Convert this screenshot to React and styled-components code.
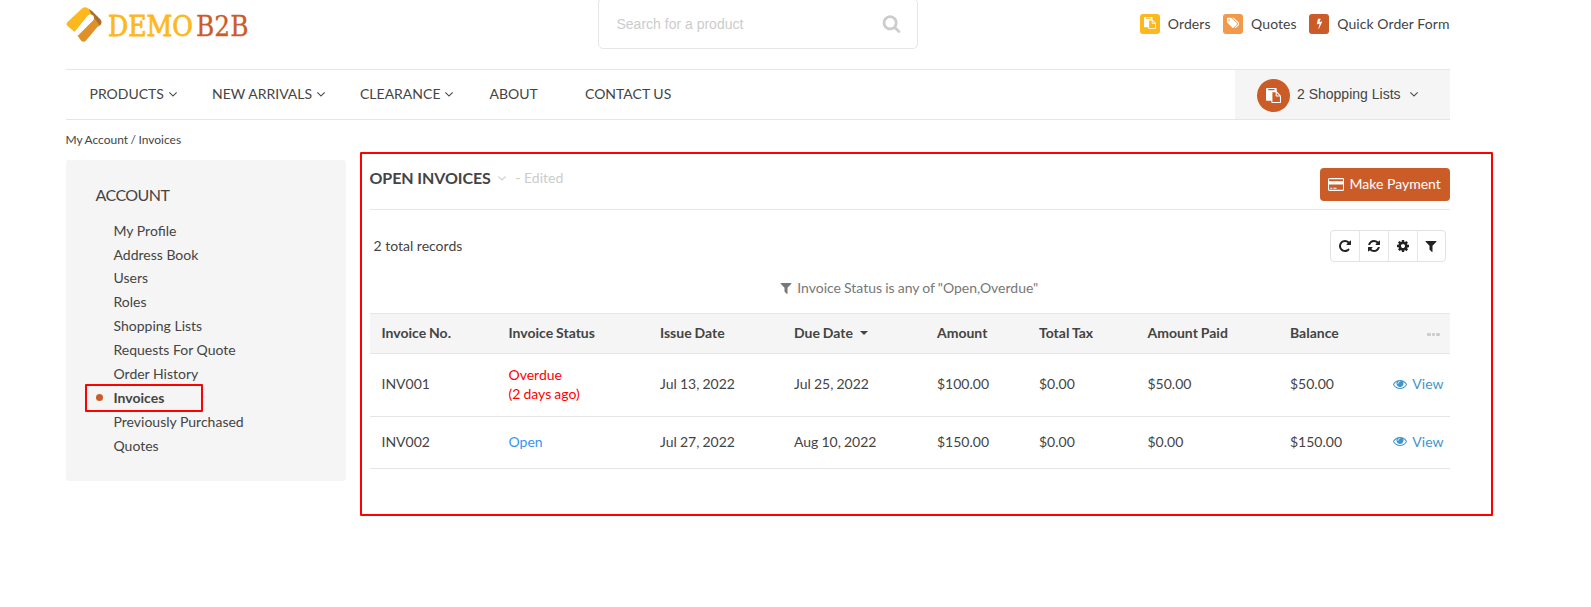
import React from "react";
import styled, { createGlobalStyle, css } from "styled-components";

const GlobalStyle = createGlobalStyle`
  * { box-sizing: border-box; }
  body {
    margin: 0;
    background: #fff;
    color: #444;
    font: 14px/20px Lato, "Liberation Sans", sans-serif;
  }
`;

const ICONS = {
  filter: [1792, "M1595 295q17 41-14 70l-493 493v742q0 42-39 59-13 5-25 5-27 0-45-19l-256-256q-19-19-19-45v-486l-493-493q-31-29-14-70 17-39 59-39h1280q42 0 59 39z"],
  cog: [1792, "M1152 896q0-106-75-181t-181-75-181 75-75 181 75 181 181 75 181-75 75-181zm512-109v222q0 12-8 23t-20 13l-185 28q-19 54-39 91 35 50 107 138 10 12 10 25t-9 23q-27 37-99 108t-94 71q-12 0-26-9l-138-108q-44 23-91 38-16 136-29 186-7 28-36 28h-222q-14 0-24.500-8.500t-11.500-21.500l-28-184q-49-16-90-37l-141 107q-10 9-25 9-14 0-25-11-126-114-165-168-7-10-7-23 0-12 8-23 15-21 51-66.500t54-70.500q-27-50-41-99l-183-27q-13-2-21-12.500t-8-23.500v-222q0-12 8-23t19-13l186-28q14-46 39-92-40-57-107-138-10-12-10-24 0-10 9-23 26-36 98.500-107.500t94.500-71.500q13 0 26 10l138 107q44-23 91-38 16-136 29-186 7-28 36-28h222q14 0 24.500 8.500t11.500 21.500l28 184q49 16 90 37l142-107q9-9 24-9 13 0 25 10 129 119 165 170 7 8 7 22 0 12-8 23-15 21-51 66.500t-54 70.500q26 50 41 98l183 28q13 2 21 12.500t8 23.500z"],
  eye: [1792, "M1664 960q-152-236-381-353 61 104 61 225 0 185-131.500 316.500t-316.500 131.500-316.500-131.500-131.500-316.500q0-121 61-225-229 117-381 353 133 205 333.500 326.500t434.500 121.500 434.500-121.500 333.500-326.500zm-720-384q0-20-14-34t-34-14q-125 0-214.500 89.500t-89.500 214.500q0 20 14 34t34 14 34-14 14-34q0-86 61-147t147-61q20 0 34-14t14-34zm848 384q0 34-20 69-140 230-376.500 368.500t-499.500 138.500-499.500-139-376.500-368q-20-35-20-69t20-69q140-229 376.500-368t499.500-139 499.500 139 376.500 368q20 35 20 69z"],
  search: [1792, "M1216 832q0-185-131.500-316.500t-316.500-131.500-316.500 131.500-131.500 316.500 131.500 316.500 316.500 131.500 316.500-131.500 131.500-316.500zm512 832q0 52-38 90t-90 38q-54 0-90-38l-343-342q-179 124-399 124-143 0-273.500-55.500t-225-150-150-225-55.500-273.500 55.500-273.500 150-225 225-150 273.500-55.500 273.500 55.500 225 150 150 225 55.500 273.500q0 220-124 399l343 343q37 37 37 90z"],
  refresh: [1792, "M1639 1056q0 5-1 7-64 268-268 434.500t-478 166.500q-146 0-282.500-55t-243.500-157l-129 129q-19 19-45 19t-45-19-19-45v-448q0-26 19-45t45-19h448q26 0 45 19t19 45-19 45l-137 137q71 66 161 102t187 36q134 0 250-65t186-179q11-17 53-117 8-23 30-23h192q13 0 22.500 9.500t9.500 22.500zm25-800v448q0 26-19 45t-45 19h-448q-26 0-45-19t-19-45 19-45l138-138q-148-137-349-137-134 0-250 65t-186 179q-11 17-53 117-8 23-30 23h-199q-13 0-22.500-9.500t-9.500-22.500v-7q65-268 270-434.500t480-166.500q146 0 284 55.500t245 156.500l130-129q19-19 45-19t45 19 19 45z"],
  repeat: [1792, "M1664 256v448q0 26-19 45t-45 19h-448q-42 0-59-40-17-39 14-69l138-138q-148-137-349-137-104 0-198.500 40.500t-163.500 109.500-109.500 163.500-40.500 198.500 40.500 198.500 109.500 163.500 163.500 109.500 198.500 40.500q119 0 225-52t179-147q7-10 23-12 15 0 25 9l137 138q9 8 9.500 20.500t-7.500 22.500q-109 132-264 204.500t-327 72.500q-156 0-298-61t-245-164-164-245-61-298 61-298 164-245 245-164 298-61q147 0 284.500 55.500t244.500 156.500l130-129q29-31 70-14 39 17 39 59z"],
  angle: [1792, "M1395 736q0 13-10 23l-466 466q-10 10-23 10t-23-10l-466-466q-10-10-10-23t10-23l50-50q10-10 23-10t23 10l393 393 393-393q10-10 23-10t23 10l50 50q10 10 10 23z"],
  paste: [1792, "M768 1664h896v-640h-416q-40 0-68-28t-28-68v-416h-384v1152zm256-1440v-64q0-13-9.500-22.500t-22.500-9.500h-704q-13 0-22.500 9.500t-9.500 22.500v64q0 13 9.500 22.500t22.500 9.500h704q13 0 22.500-9.500t9.500-22.500zm256 672h299l-299-299v299zm512 128v672q0 40-28 68t-68 28h-960q-40 0-68-28t-28-68v-160h-544q-40 0-68-28t-28-68v-1344q0-40 28-68t68-28h1088q40 0 68 28t28 68v328q21 13 36 28l408 408q28 28 48 76t20 88z"],
  card: [1920, "M1760 128q66 0 113 47t47 113v1216q0 66-47 113t-113 47h-1600q-66 0-113-47t-47-113v-1216q0-66 47-113t113-47h1600zm-1600 128q-13 0-22.500 9.500t-9.500 22.500v224h1664v-224q0-13-9.500-22.500t-22.500-9.500h-1600zm1600 1280q13 0 22.500-9.500t9.500-22.500v-608h-1664v608q0 13 9.500 22.500t22.500 9.500h1600zm-1504-128v-128h256v128h-256zm384 0v-128h384v128h-384z"],
  tags: [1920, "M448 448q0-53-37.500-90.500t-90.500-37.500-90.500 37.500-37.500 90.500 37.500 90.500 90.500 37.500 90.500-37.500 37.500-90.500zm1067 576q0 53-37 90l-491 492q-39 37-91 37-53 0-90-37l-715-716q-38-37-64.500-101t-26.500-117v-416q0-52 38-90t90-38h416q53 0 117 26.500t102 64.500l715 714q37 39 37 91zm384 0q0 53-37 90l-491 492q-39 37-91 37-36 0-59-14t-53-45l470-470q37-37 37-90 0-52-37-91l-715-714q-38-38-102-64.500t-117-26.500h224q53 0 117 26.500t102 64.500l715 714q37 39 37 91z"],
  bolt: [1792, "M1333 566q18 20 7 44l-540 1157q-13 25-42 25-4 0-14-2-17-5-25.500-19t-4.500-30l197-808-406 101q-4 1-12 1-18 0-31-11-18-15-13-39l201-825q4-14 16-23t28-9h328q19 0 32 12.500t13 29.500q0 8-5 18l-171 463 396-98q8-2 12-2 19 0 34 15z"],
};

const Glyph = styled.svg`
  display: block;
  flex: none;
  fill: currentColor;
`;

function Icon({ name, size = 14 }) {
  const [w, d] = ICONS[name];
  return (
    <Glyph viewBox={`0 0 ${w} 1792`} width={(size * w) / 1792} height={size} aria-hidden="true">
      <path d={d} />
    </Glyph>
  );
}

const Page = styled.div`
  width: 1384px;
  min-height: 607px;
  margin-left: 65.5px;
`;

const Header = styled.header`
  display: flex;
  height: 69px;
`;

const Logo = styled.svg`
  display: block;
  width: 190px;
  height: 48px;
  font-family: "DejaVu Serif", serif;
  font-size: 28px;
`;

const SearchBox = styled.label`
  display: flex;
  align-items: center;
  justify-content: space-between;
  width: 320px;
  height: 51px;
  margin: -2px 0 0 342px;
  padding: 0 16px 0 18px;
  border: 1px solid #e6e6e6;
  border-radius: 5px;
  color: #ccc;
`;

const SearchInput = styled.input`
  width: 220px;
  padding: 0;
  border: 0;
  outline: 0;
  background: none;
  font: 14px "Liberation Sans", Arial, sans-serif;
  &::placeholder { color: #ccc; opacity: 1; }
`;

const QuickLinks = styled.nav`
  display: flex;
  height: 48px;
  margin-left: auto;
  align-items: center;
  gap: 12.5px;
  letter-spacing: 0.08px;
`;

const QuickLink = styled.a`
  display: flex;
  align-items: center;
  gap: 8px;
`;

const Tile = styled.span`
  display: flex;
  align-items: center;
  justify-content: center;
  width: 20px;
  height: 20px;
  padding-bottom: 2px;
  border-radius: 3px;
  background: ${(p) => p.$color};
  color: #fff;
`;

const NavBar = styled.nav`
  display: flex;
  height: 51px;
  border: solid #e6e6e6;
  border-width: 1px 0;
  padding-left: 24px;
`;

const NavItem = styled.a`
  display: flex;
  align-items: center;
  gap: 2px;
  width: ${(p) => p.$width}px;
  padding-bottom: 1px;
  white-space: nowrap;
`;

const ShoppingLists = styled.button`
  display: flex;
  align-items: center;
  width: 215px;
  margin-left: auto;
  padding: 2px 0 0 22px;
  border: 0;
  background: #f5f5f5;
  color: #444;
  font: 14px "Liberation Sans", Arial, sans-serif;
`;

const ListBadge = styled.span`
  display: flex;
  align-items: center;
  justify-content: center;
  width: 33px;
  height: 33px;
  margin-right: 7.5px;
  border-radius: 50%;
  background: #cb5c28;
  color: #fff;
`;

const ListLabel = styled.span`
  display: flex;
  align-items: center;
  gap: 6px;
  padding-bottom: 3px;
`;

const Breadcrumb = styled.div`
  height: 40px;
  padding-top: 10px;
  font-size: 12px;
  word-spacing: -0.6px;
`;

const Columns = styled.div`
  display: flex;
  align-items: flex-start;
  gap: 24px;
`;

const Sidebar = styled.aside`
  width: 280px;
  height: 321px;
  padding: 25px 30px;
  border-radius: 3px;
  background: #f5f5f5;
`;

const SidebarTitle = styled.h2`
  margin: 0 0 15.65px;
  font-size: 16px;
  font-weight: 400;
  line-height: 20px;
  letter-spacing: -0.55px;
`;

const Menu = styled.ul`
  margin: 0;
  padding: 0 0 0 18px;
  list-style: none;
`;

const MenuItem = styled.li`
  position: relative;
  height: 23.9px;
  line-height: 20px;
  ${(p) =>
    p.$active &&
    css`
      font-weight: 700;
      &::before {
        content: "";
        position: absolute;
        left: -18px;
        top: 6px;
        width: 7px;
        height: 7px;
        border-radius: 50%;
        background: #cb5c28;
      }
    `}
`;

const Outline = styled.span`
  position: absolute;
  border: 2px solid #ff0000;
  border-radius: 1px;
  pointer-events: none;
`;

const MenuOutline = styled(Outline)`
  left: -28.5px;
  top: -3.95px;
  width: 118px;
  height: 28px;
`;

const MainOutline = styled(Outline)`
  left: -9.5px;
  top: -8px;
  width: 1133px;
  height: 364px;
`;

const Main = styled.main`
  position: relative;
  width: 1080px;
`;

const TitleRow = styled.div`
  display: flex;
  height: 50px;
  padding-top: 8px;
  border-bottom: 1px solid #e6e6e6;
`;

const Title = styled.h1`
  margin: 0 4.5px 0 0;
  font-size: 16px;
  font-weight: 700;
  line-height: 20px;
  letter-spacing: -0.08px;
`;

const Edited = styled.span`
  display: flex;
  align-items: center;
  height: 20px;
  gap: 6px;
  color: #ccc;
`;

const PayButton = styled.button`
  display: flex;
  align-items: center;
  gap: 6px;
  width: 130px;
  height: 33px;
  margin-left: auto;
  padding: 0 0 1px 8px;
  border: 0;
  border-radius: 4px;
  background: #cb5c28;
  color: #fff;
  font: inherit;
  white-space: nowrap;
`;

const Toolbar = styled.div`
  display: flex;
  align-items: center;
  justify-content: space-between;
  margin-top: 20px;
  padding: 0 4px;
`;

const ButtonGroup = styled.div`
  display: flex;
  height: 32px;
  border: 1px solid #e2e2e2;
  border-radius: 4px;
`;

const ToolButton = styled.button`
  display: flex;
  align-items: center;
  justify-content: center;
  width: 29px;
  padding: 0;
  border: 0;
  background: none;
  color: #222;
  & + & { border-left: 1px solid #e6e6e6; }
  &:first-child { width: 28px; }
  &:last-child { width: 28px; }
`;

const FilterNote = styled.div`
  display: flex;
  align-items: center;
  justify-content: center;
  gap: 4.5px;
  height: 51px;
  padding-right: 2px;
  word-spacing: -0.5px;
  color: #777;
`;

const Table = styled.table`
  width: 1080px;
  border-collapse: collapse;
  table-layout: fixed;
`;

const Col = styled.col`
  width: ${(p) => p.$width}px;
`;

const Row = styled.tr`
  height: ${(p) => p.$height}px;
  border-bottom: 1px solid #e6e6e6;
`;

const HeadRow = styled(Row)`
  border-top: 1px solid #e6e6e6;
  background: #f5f5f5;
`;

const cell = css`
  padding: 0 0 2px 12px;
  text-align: left;
  line-height: 19px;
  white-space: nowrap;
  word-spacing: -0.5px;
`;
const Th = styled.th`${cell}`;
const Td = styled.td`
  ${cell}
  padding-bottom: 3px;
  color: ${(p) => p.$color || "inherit"};
`;

const Caret = styled.span`
  display: inline-block;
  margin: 0 0 3px 7.5px;
  border: 4px solid transparent;
  border-top-color: #444;
  border-bottom: 0;
`;

const Dots = styled.span`
  display: flex;
  justify-content: flex-end;
  gap: 1px;
  padding: 4px 10px 0 0;
`;

const Dot = styled.i`
  width: 3.4px;
  height: 3.4px;
  border-radius: 1px;
  background: #ccc;
`;

const ViewLink = styled.a`
  display: flex;
  align-items: center;
  justify-content: flex-end;
  gap: 5px;
  padding-right: 6px;
  color: #4195ce;
`;

const navItems = [
  ["PRODUCTS", 122.5, true],
  ["NEW ARRIVALS", 148, true],
  ["CLEARANCE", 129.5, true],
  ["ABOUT", 95.5, false],
  ["CONTACT US", 100, false],
];

const menu = ["My Profile", "Address Book", "Users", "Roles", "Shopping Lists", "Requests For Quote", "Order History", "Invoices", "Previously Purchased", "Quotes"];

const widths = [127, 151.5, 134, 143, 102, 108.5, 142.5, 86, 85.5];
const heads = ["Invoice No.", "Invoice Status", "Issue Date", "Due Date", "Amount", "Total Tax", "Amount Paid", "Balance"];

const invoices = [
  { no: "INV001", status: ["Overdue", "(2 days ago)"], color: "#ff0000", height: 63, rest: ["Jul 13, 2022", "Jul 25, 2022", "$100.00", "$0.00", "$50.00", "$50.00"] },
  { no: "INV002", status: ["Open"], color: "#3395fb", height: 52, rest: ["Jul 27, 2022", "Aug 10, 2022", "$150.00", "$0.00", "$0.00", "$150.00"] },
];

function Brand() {
  return (
    <Logo viewBox="0 0 190 48">
      <path d="M1.500 22 16 8.500Q19.500 6 23 9L27 14.500Q24 13.500 21.500 16L9 32.300 1.500 26Q-0.500 24 1.500 22z" fill="#fdb81e" />
      <path d="M23 9 26 11 34.500 19.500Q36.500 22.500 34.500 25L32 26.500 27.500 19.500 25 14z" fill="#a96f2b" />
      <path d="M11.200 35.300 26 21Q28 19 27.800 17.500L33.300 24.800 20 40.500Q17.500 43 15 40.500z" fill="#df9026" />
      <path d="M21.500 16Q24.500 13.500 27 15.500 29.200 18 27 20.500L11.800 35.800 8.500 32z" fill="#fff" />
      <text x="42" y="35.500" fill="#fdb81e" stroke="#fdb81e" strokeWidth="0.800" textLength="85" lengthAdjust="spacingAndGlyphs">DEMO</text>
      <text x="130" y="35.500" fill="#cb5c28" stroke="#cb5c28" strokeWidth="0.300" textLength="52.500" lengthAdjust="spacingAndGlyphs">B2B</text>
    </Logo>
  );
}

export default function App() {
  return (
    <>
      <GlobalStyle />
      <Page>
        <Header>
          <Brand />
          <SearchBox>
            <SearchInput placeholder="Search for a product" />
            <Icon name="search" size={19} />
          </SearchBox>
          <QuickLinks>
            <QuickLink><Tile $color="#fdb81e"><Icon name="paste" size={12} /></Tile>Orders</QuickLink>
            <QuickLink><Tile $color="#f2994a"><Icon name="tags" size={12} /></Tile>Quotes</QuickLink>
            <QuickLink><Tile $color="#cb5c28"><Icon name="bolt" size={11} /></Tile>Quick Order Form</QuickLink>
          </QuickLinks>
        </Header>
        <NavBar>
          {navItems.map(([label, width, arrow]) => (
            <NavItem key={label} $width={width}>
              {label}
              {arrow && <Icon name="angle" />}
            </NavItem>
          ))}
          <ShoppingLists>
            <ListBadge><Icon name="paste" size={15} /></ListBadge>
            <ListLabel>2 Shopping Lists<Icon name="angle" /></ListLabel>
          </ShoppingLists>
        </NavBar>
        <Breadcrumb>My Account / Invoices</Breadcrumb>
        <Columns>
          <Sidebar>
            <SidebarTitle>ACCOUNT</SidebarTitle>
            <Menu>
              {menu.map((m) => (
                <MenuItem key={m} $active={m === "Invoices"}>
                  {m}
                  {m === "Invoices" && <MenuOutline />}
                </MenuItem>
              ))}
            </Menu>
          </Sidebar>
          <Main>
            <TitleRow>
              <Title>OPEN INVOICES</Title>
              <Edited><Icon name="angle" />- Edited</Edited>
              <PayButton><Icon name="card" size={15} />Make Payment</PayButton>
            </TitleRow>
            <Toolbar>
              <span>2 total records</span>
              <ButtonGroup>
                {["repeat", "refresh", "cog", "filter"].map((n) => (
                  <ToolButton key={n} aria-label={n}><Icon name={n} /></ToolButton>
                ))}
              </ButtonGroup>
            </Toolbar>
            <FilterNote><Icon name="filter" />Invoice Status is any of "Open,Overdue"</FilterNote>
            <Table>
              <colgroup>{widths.map((w, i) => <Col key={i} $width={w} />)}</colgroup>
              <thead>
                <HeadRow $height={40}>
                  {heads.map((h) => <Th key={h}>{h}{h === "Due Date" && <Caret />}</Th>)}
                  <Th><Dots><Dot /><Dot /><Dot /></Dots></Th>
                </HeadRow>
              </thead>
              <tbody>
                {invoices.map((inv) => (
                  <Row key={inv.no} $height={inv.height}>
                    <Td>{inv.no}</Td>
                    <Td $color={inv.color}>{inv.status.map((s) => <div key={s}>{s}</div>)}</Td>
                    {inv.rest.map((v, i) => <Td key={i}>{v}</Td>)}
                    <Td><ViewLink><Icon name="eye" />View</ViewLink></Td>
                  </Row>
                ))}
              </tbody>
            </Table>
            <MainOutline />
          </Main>
        </Columns>
      </Page>
    </>
  );
}
